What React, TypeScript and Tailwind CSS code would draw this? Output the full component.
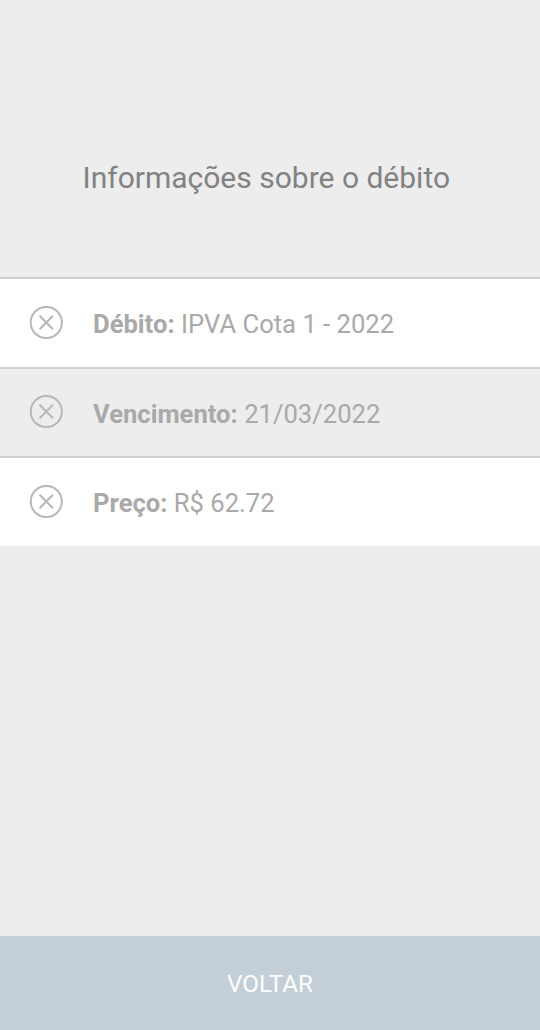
import React from "react";

interface InfoRow {
  label: string;
  value: string;
}

const rows: InfoRow[] = [
  { label: "Débito:", value: "IPVA Cota 1 - 2022" },
  { label: "Vencimento:", value: "21/03/2022" },
  { label: "Preço:", value: "R$ 62.72" },
];

const CloseCircleIcon = () => (
  <svg
    className="w-[34px] h-[34px] shrink-0"
    viewBox="0 0 34 34"
    fill="none"
    stroke="#b8b8b8"
    strokeWidth={2}
  >
    <circle cx="17.3" cy="16.5" r="15.6" />
    <path d="M10.6 9.8l13.4 13.4M24 9.8l-13.4 13.4" />
  </svg>
);

const App: React.FC = () => {
  return (
    <div className="flex flex-col h-screen bg-[#ededed] font-['Roboto',sans-serif]">
      <header className="h-[277px] shrink-0 pt-[156px] pl-[82.5px]">
        <h1 className="text-[30px] leading-[44px] text-[#828282] whitespace-nowrap">
          Informações sobre o débito
        </h1>
      </header>

      <ul>
        {rows.map((row) => (
          <li
            key={row.label}
            className="flex items-center h-[89.5px] gap-[30px] pl-[29px] border-t-2 border-[#d0d0d0] bg-white even:bg-[#ededed]"
          >
            <CloseCircleIcon />
            <p className="pt-[3px] text-[25.6px] leading-[30px] text-[#a9a9a9] whitespace-nowrap">
              <strong className="font-bold">{row.label}</strong> {row.value}
            </p>
          </li>
        ))}
      </ul>

      <button className="mt-auto h-[94px] pt-0.5 bg-[#c3ced7] text-white text-[24.2px]">
        VOLTAR
      </button>
    </div>
  );
};

export default App;
